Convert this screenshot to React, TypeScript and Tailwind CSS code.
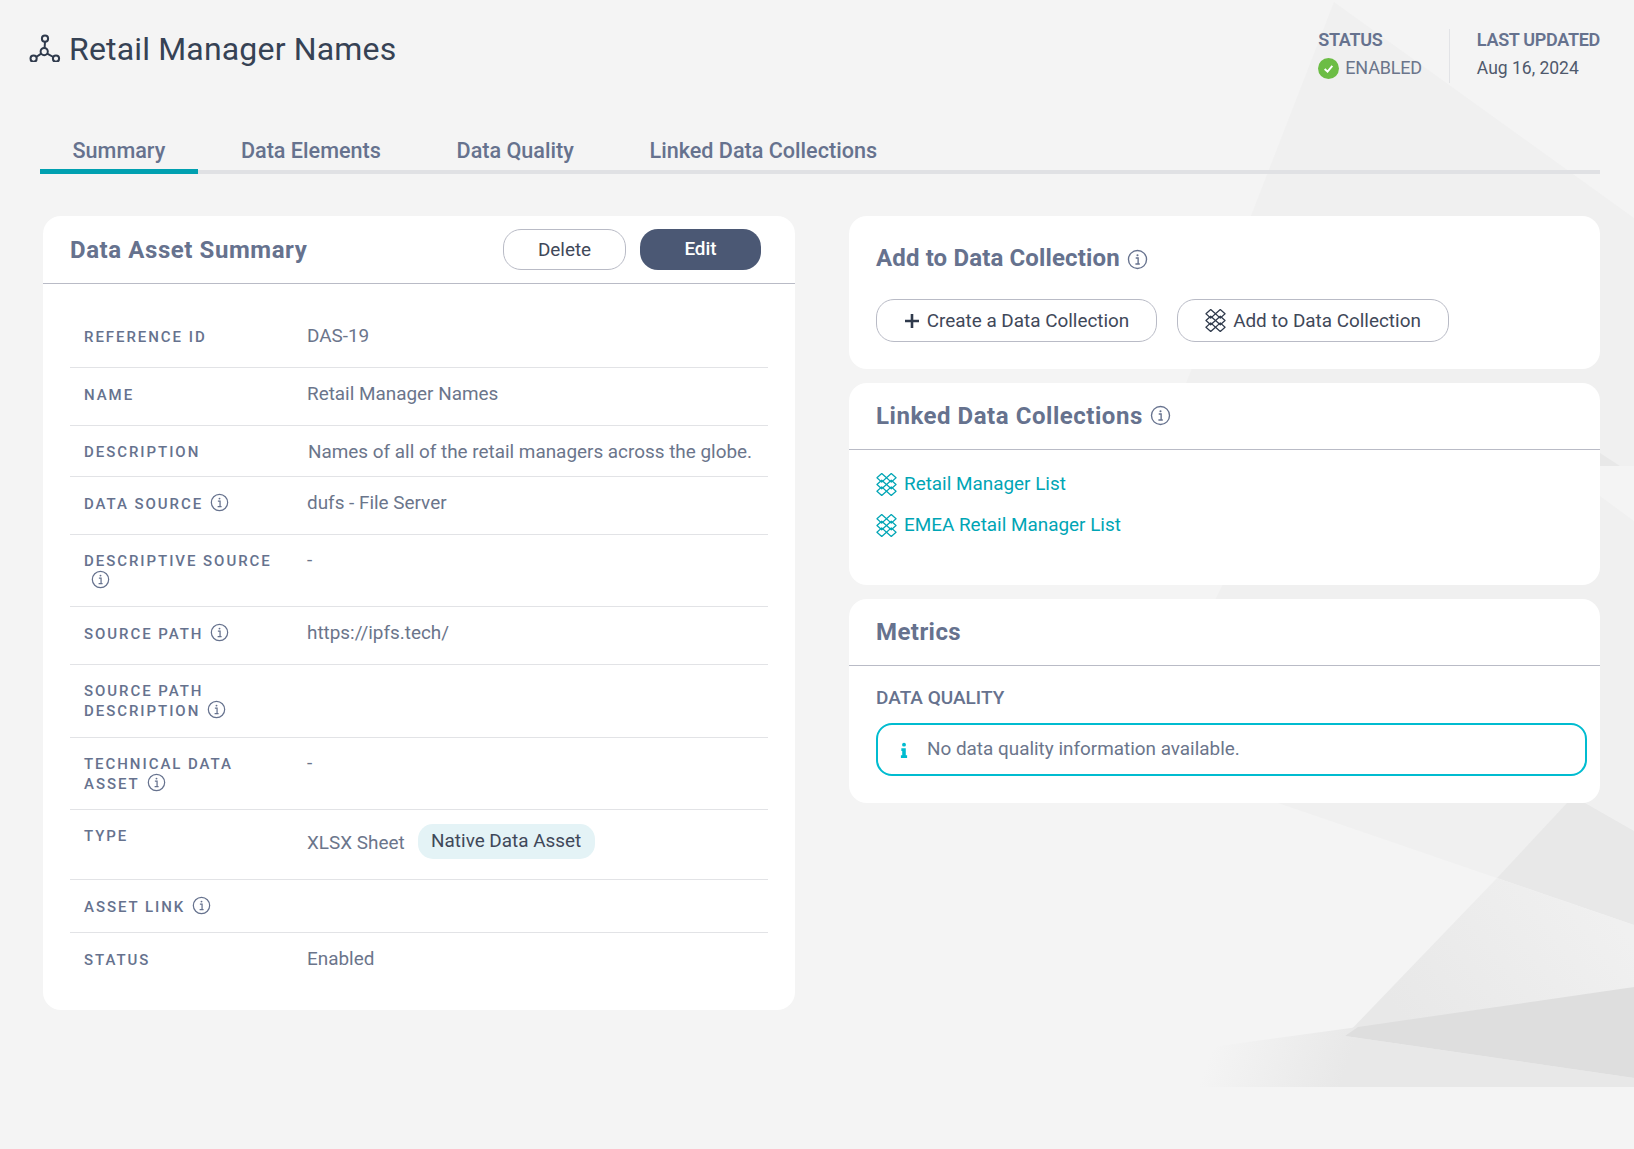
import { ReactNode } from 'react'

const FONT = "font-['Roboto','Liberation_Sans',sans-serif]"

function InfoIcon({ className = '' }: { className?: string }) {
  return (
    <svg viewBox="0 0 20 20" className={`inline-block w-[19px] h-[19px] shrink-0 ${className}`} fill="none">
      <circle cx="10" cy="10" r="8.6" stroke="currentColor" strokeWidth="1.3" />
      <circle cx="10" cy="5.9" r="1" fill="currentColor" />
      <path d="M8.3 8.6h2.3v5.4M8 14.3h4.2" stroke="currentColor" strokeWidth="1.3" />
    </svg>
  )
}

function CollectionIcon({ className = '' }: { className?: string }) {
  const rows = [5, 12, 19]
  return (
    <svg viewBox="0 0 22 24" className={`w-[21px] h-[23px] shrink-0 ${className}`} fill="none" stroke="currentColor" strokeWidth="1.3" strokeLinejoin="round">
      {rows.map((y) => (
        <g key={y}>
          <path d={`M6 ${y - 4.5}L11 ${y}L6 ${y + 4.5}L1 ${y}Z`} />
          <path d={`M16 ${y - 4.5}L21 ${y}L16 ${y + 4.5}L11 ${y}Z`} />
        </g>
      ))}
    </svg>
  )
}

function NetworkIcon() {
  return (
    <svg viewBox="0 0 32 28" className="w-[32px] h-[28px] mt-[5px] shrink-0 text-[#2f3a4c]" fill="none" stroke="currentColor" strokeWidth="2">
      <circle cx="16" cy="4.7" r="3.1" />
      <circle cx="15.2" cy="17.6" r="3.6" />
      <circle cx="4.6" cy="24.6" r="3.1" />
      <circle cx="27" cy="24.6" r="3.1" />
      <path d="M16 7.8L15.6 14M12.2 19.6L7.2 23M18.2 19.6L24.3 23" />
    </svg>
  )
}

function Background() {
  return (
    <svg className="absolute inset-0 w-full h-full pointer-events-none" viewBox="0 0 1634 1149" preserveAspectRatio="none">
      <defs>
        <linearGradient id="fadeLow" gradientUnits="userSpaceOnUse" x1="1600" y1="900" x2="1420" y2="1040">
          <stop offset="0" stopColor="#f0f0f0" />
          <stop offset="1" stopColor="#e8e8e8" />
        </linearGradient>
        <linearGradient id="fadeBottom" gradientUnits="userSpaceOnUse" x1="1215" y1="1040" x2="1340" y2="1085">
          <stop offset="0" stopColor="#f4f4f4" />
          <stop offset="1" stopColor="#e8e8e8" />
        </linearGradient>
      </defs>
      <polygon points="1334,2 1634,218 1634,466 1154,466" fill="#f0f0f0" />
      <polygon points="1600,453 1620,466 1600,466" fill="#e8e8e8" />
      <polygon points="1600,496 1634,521 1634,925 1278,803 1205,620 1230,570" fill="#f0f0f0" />
      <polygon points="1567,803 1585,803 1634,831 1634,925 1497,878" fill="#e8e8e8" />
      <polygon points="1497,878 1634,925 1634,987 1345,1036" fill="url(#fadeLow)" />
      <polygon points="1634,1078 1345,1036 1358,1027 1190,1050 1170,1087 1634,1087" fill="url(#fadeBottom)" />
      <polygon points="1345,1036 1358,1027 1634,987 1634,1078" fill="#dedede" />
    </svg>
  )
}

function Row({ label, children, h, icon = false, pt = 'pt-[16px]', labelUp = false }: { label: ReactNode; children?: ReactNode; h: string; icon?: boolean; pt?: string; labelUp?: boolean }) {
  return (
    <div className={`flex items-start border-b-[1.5px] border-[#e2e3e6] last:border-b-0 ${pt} ${h}`}>
      <div className={`w-[237px] shrink-0 pl-[14px] pr-[10px] text-[15px] leading-[20px] font-medium tracking-[1.95px] uppercase text-[#66728e] ${labelUp ? 'pt-0' : 'pt-[1px]'}`}>
        {label}
        {icon && <InfoIcon className="ml-[7px] -mt-[5px] align-middle text-[#66728e]" />}
      </div>
      <div className="flex-1 -mt-[2px] text-[18.9px] leading-[24px] text-[#6b758b]">{children}</div>
    </div>
  )
}

function CardHeading({ title, info = false, tracking, iconClass = '' }: { title: string; info?: boolean; tracking: string; iconClass?: string }) {
  return (
    <h2 className={`flex items-center gap-[7px] text-[24px] leading-[32px] font-bold text-[#66728e] ${tracking}`}>
      {title}
      {info && <InfoIcon className={`w-[21px] h-[21px] text-[#66728e] ${iconClass}`} />}
    </h2>
  )
}

export default function App() {
  return (
    <div className={`relative h-screen overflow-hidden bg-[#f4f4f4] ${FONT}`}>
      <Background />
      <div className="relative">
        <header className="flex justify-between pl-[29px] pr-[34px] pt-[29px] h-[131px]">
          <div className="flex items-start gap-[8px]">
            <NetworkIcon />
            <h1 className="text-[32px] leading-[40px] tracking-[0.17px] text-[#364254] font-normal">Retail Manager Names</h1>
          </div>
          <div className="flex h-[54px]">
            <div className="pr-[27px] border-r border-[#e2e3e6]">
              <div className="pt-[1px] text-[18px] leading-[20px] font-semibold tracking-[-0.3px] text-[#66728e]">STATUS</div>
              <div className="flex items-center gap-[6px] mt-[6px]">
                <svg viewBox="0 0 22 22" className="w-[21px] h-[21px]">
                  <circle cx="11" cy="11" r="11" fill="#6cbd45" />
                  <path d="M7 11.5l3 2.8 5-6" fill="none" stroke="#fff" strokeWidth="2" />
                </svg>
                <span className="text-[18px] leading-[24px] tracking-[-0.2px] text-[#6b758b]">ENABLED</span>
              </div>
            </div>
            <div className="pl-[27px]">
              <div className="pt-[1px] text-[18px] leading-[20px] font-semibold tracking-[-0.3px] text-[#66728e]">LAST UPDATED</div>
              <div className="text-[17.5px] leading-[24px] mt-[6px] text-[#4f596c]">Aug 16, 2024</div>
            </div>
          </div>
        </header>

        <nav className="flex gap-[10.7px] ml-[40px] mr-[34px] h-[43px] border-b-4 border-[#e0e1e4] text-[21.6px] leading-[28px] font-medium text-[#66728e]">
          <div className="h-[43px] px-[32.5px] pt-[6px] border-b-[5px] border-[#00a0b0]">Summary</div>
          <div className="px-[32.5px] pt-[6px]">Data Elements</div>
          <div className="px-[32.5px] pt-[6px]">Data Quality</div>
          <div className="px-[32.5px] pt-[6px]">Linked Data Collections</div>
        </nav>

        <main className="grid grid-cols-[752px_751px] gap-[54px] ml-[43px] mt-[42px]">
          <section className="bg-white rounded-[18px] h-[794px]">
            <div className="flex items-center justify-between h-[68px] pl-[27px] pr-[34px] border-b-[1.5px] border-[#b9bbc6]">
              <h2 className="text-[24px] leading-[32px] font-bold tracking-[0.58px] text-[#66728e]">Data Asset Summary</h2>
              <div className="flex gap-[14px]">
                <button className="w-[123px] h-[41px] pt-[2px] rounded-[18px] border border-[#b9bbc6] bg-white text-[18.9px] text-[#3f4859]">Delete</button>
                <button className="w-[121px] h-[41px] rounded-[18px] bg-[#4b5874] text-[18.9px] font-medium text-white">Edit</button>
              </div>
            </div>
            <div className="px-[27px]">
              <Row label="Reference ID" h="h-[84px]" pt="pt-[42px]">DAS-19</Row>
              <Row label="Name" h="h-[58px]">Retail Manager Names</Row>
              <Row label="Description" h="h-[51px]" labelUp><span className="pl-[1px]">Names of all of the retail managers across the globe.</span></Row>
              <Row label="Data Source" h="h-[58px]" icon>dufs - File Server</Row>
              <Row label="Descriptive Source" h="h-[72px]" icon labelUp><div className="-mt-[1px]">-</div></Row>
              <Row label="Source Path" h="h-[58px]" icon>https://ipfs.tech/</Row>
              <Row label={<>Source Path<br />Description</>} h="h-[73px]" icon labelUp />
              <Row label={<>Technical Data<br />Asset</>} h="h-[72px]" icon labelUp><div className="-mt-[1px]">-</div></Row>
              <Row label="Type" h="h-[70px]" labelUp>
                <div className="flex items-center gap-[13px]">
                  <span className="translate-y-[1px]">XLSX Sheet</span>
                  <span className="h-[35px] px-[13.5px] rounded-[15px] bg-[#e4f3f6] text-[#3f4859] leading-[33px]">Native Data Asset</span>
                </div>
              </Row>
              <Row label="Asset Link" h="h-[53px]" icon />
              <Row label="Status" h="h-[77px]">Enabled</Row>
            </div>
          </section>

          <div className="flex flex-col gap-[14px]">
            <section className="bg-white rounded-[18px] h-[153px] px-[27px] pt-[26px]">
              <CardHeading title="Add to Data Collection" info tracking="tracking-[0.14px]" iconClass="mt-[2px]" />
              <div className="flex gap-[20px] mt-[25px]">
                <button className="flex items-center justify-center gap-[7px] w-[281px] h-[43px] pt-[2px] rounded-[18px] border border-[#b9bbc6] bg-white text-[18.9px] text-[#3f4859]">
                  <svg viewBox="0 0 16 16" className="w-[16px] h-[16px] -mt-[2px] text-[#2f3a4c]" fill="none" stroke="currentColor" strokeWidth="2.6"><path d="M8 1v14M1 8h14" /></svg>
                  Create a Data Collection
                </button>
                <button className="flex items-center justify-center gap-[7px] w-[272px] h-[43px] pt-[2px] rounded-[18px] border border-[#b9bbc6] bg-white text-[18.9px] text-[#3f4859]">
                  <CollectionIcon className="-mt-[2px] text-[#2f3a4c]" />
                  Add to Data Collection
                </button>
              </div>
            </section>

            <section className="bg-white rounded-[18px] h-[202px]">
              <div className="h-[67px] px-[27px] pt-[17px] border-b-[1.5px] border-[#b9bbc6]">
                <CardHeading title="Linked Data Collections" info tracking="tracking-[0.54px]" iconClass="-mt-[2px]" />
              </div>
              <div className="flex flex-col gap-[17px] pl-[27px] pt-[22px] text-[18.9px] leading-[24px] text-[#00a5b5]">
                <a className="flex items-center gap-[7px]"><CollectionIcon />Retail Manager List</a>
                <a className="flex items-center gap-[7px]"><CollectionIcon />EMEA Retail Manager List</a>
              </div>
            </section>

            <section className="bg-white rounded-[18px] h-[204px]">
              <div className="h-[67px] px-[27px] pt-[17px] border-b-[1.5px] border-[#b9bbc6]">
                <CardHeading title="Metrics" tracking="tracking-[0.43px]" />
              </div>
              <div className="pl-[27px] pr-[13px] pt-[20px]">
                <div className="text-[19px] leading-[24px] font-medium text-[#66728e]">DATA QUALITY</div>
                <div className="flex items-center h-[53px] mt-[13px] pl-[21px] rounded-[16px] border-2 border-[#00bcd0] text-[18.9px] text-[#6b758b]">
                  <svg viewBox="0 0 10 18" className="w-[10px] h-[16px] text-[#00bcd0] mr-[18px]" fill="currentColor">
                    <circle cx="5" cy="3" r="2.2" />
                    <path d="M2 7h5v8h1.5v3h-7v-3H3v-5H2z" />
                  </svg>
                  No data quality information available.
                </div>
              </div>
            </section>
          </div>
        </main>
      </div>
    </div>
  )
}
